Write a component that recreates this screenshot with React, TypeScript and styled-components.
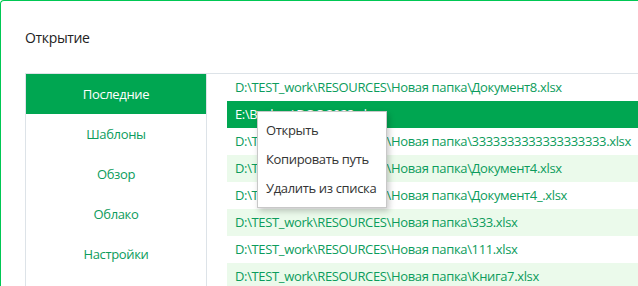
import React from 'react'
import styled, { createGlobalStyle } from 'styled-components'

const GREEN = '#00a651'
const TEXT_GREEN = '#0c9c5c'
const LINE = '#dde3e8'

const GlobalStyle = createGlobalStyle`
  html, body {
    margin: 0;
    padding: 0;
    background: #fff;
    overflow: hidden;
  }
  body {
    font-family: "Open Sans", "Noto Sans", sans-serif;
    letter-spacing: -0.35px;
  }
`

const navItems = ['Последние', 'Шаблоны', 'Обзор', 'Облако', 'Настройки']

const files = [
  'D:\\TEST_work\\RESOURCES\\Новая папка\\Документ8.xlsx',
  'E:\\Backup\\DOC 2023.xlsx',
  'D:\\TEST_work\\RESOURCES\\Новая папка\\3333333333333333333.xlsx',
  'D:\\TEST_work\\RESOURCES\\Новая папка\\Документ4.xlsx',
  'D:\\TEST_work\\RESOURCES\\Новая папка\\Документ4_.xlsx',
  'D:\\TEST_work\\RESOURCES\\Новая папка\\333.xlsx',
  'D:\\TEST_work\\RESOURCES\\Новая папка\\111.xlsx',
  'D:\\TEST_work\\RESOURCES\\Новая папка\\Книга7.xlsx',
]

const menuItems = ['Открыть', 'Копировать путь', 'Удалить из списка']

const App: React.FC = () => {
  const activeNav = 0
  const selectedFile = 1

  return (
    <>
      <GlobalStyle />
      <Frame>
        <Title>Открытие</Title>
        <Panel>
          <Nav>
            {navItems.map((item, i) => (
              <NavItem key={item} active={i === activeNav}>
                {item}
              </NavItem>
            ))}
          </Nav>
          <ListArea>
            {files.map((file, i) => (
              <FileRow key={i} selected={i === selectedFile} striped={i % 2 === 1}>
                {file}
              </FileRow>
            ))}
            <ContextMenu>
              {menuItems.map(item => (
                <MenuItem key={item}>{item}</MenuItem>
              ))}
            </ContextMenu>
          </ListArea>
        </Panel>
      </Frame>
    </>
  )
}

export default App

const Frame = styled.div`
  box-sizing: border-box;
  height: 286px;
  border-top: 1px solid #00c853;
  border-left: 1px solid #00c853;
  border-top-left-radius: 4px;
  padding: 27px 0 0 24px;
`

const Title = styled.div`
  height: 20px;
  line-height: 20px;
  font-size: 14px;
  color: #222;
`

const Panel = styled.div`
  display: flex;
  margin-top: 25px;
  border-top: 1px solid ${LINE};
  border-left: 1px solid ${LINE};
  height: 220px;
`

const Nav = styled.div`
  display: flex;
  flex-direction: column;
  width: 180px;
  flex-shrink: 0;
  border-right: 1px solid ${LINE};
`

const NavItem = styled.div<{ active?: boolean }>`
  height: 40px;
  line-height: 40px;
  text-align: center;
  font-size: 13px;
  color: ${p => (p.active ? '#fff' : TEXT_GREEN)};
  background: ${p => (p.active ? GREEN : 'transparent')};
`

const ListArea = styled.div`
  position: relative;
  flex: 1;
  padding-left: 20px;
`

const FileRow = styled.div<{ selected?: boolean; striped?: boolean }>`
  height: 27px;
  line-height: 27px;
  padding-left: 8px;
  font-size: 13px;
  white-space: nowrap;
  color: ${p => (p.selected ? '#fff' : TEXT_GREEN)};
  background: ${p => (p.selected ? GREEN : p.striped ? '#ebfaeb' : 'transparent')};
`

const ContextMenu = styled.div`
  position: absolute;
  left: 50px;
  top: 37px;
  width: 128px;
  padding: 4px 0;
  background: #fff;
  border: 1px solid #c8c8c8;
  box-shadow: 2px 3px 6px rgba(0, 0, 0, 0.22);
`

const MenuItem = styled.div`
  height: 29px;
  line-height: 29px;
  padding-left: 8px;
  font-size: 13px;
  color: #333;
  white-space: nowrap;
`
